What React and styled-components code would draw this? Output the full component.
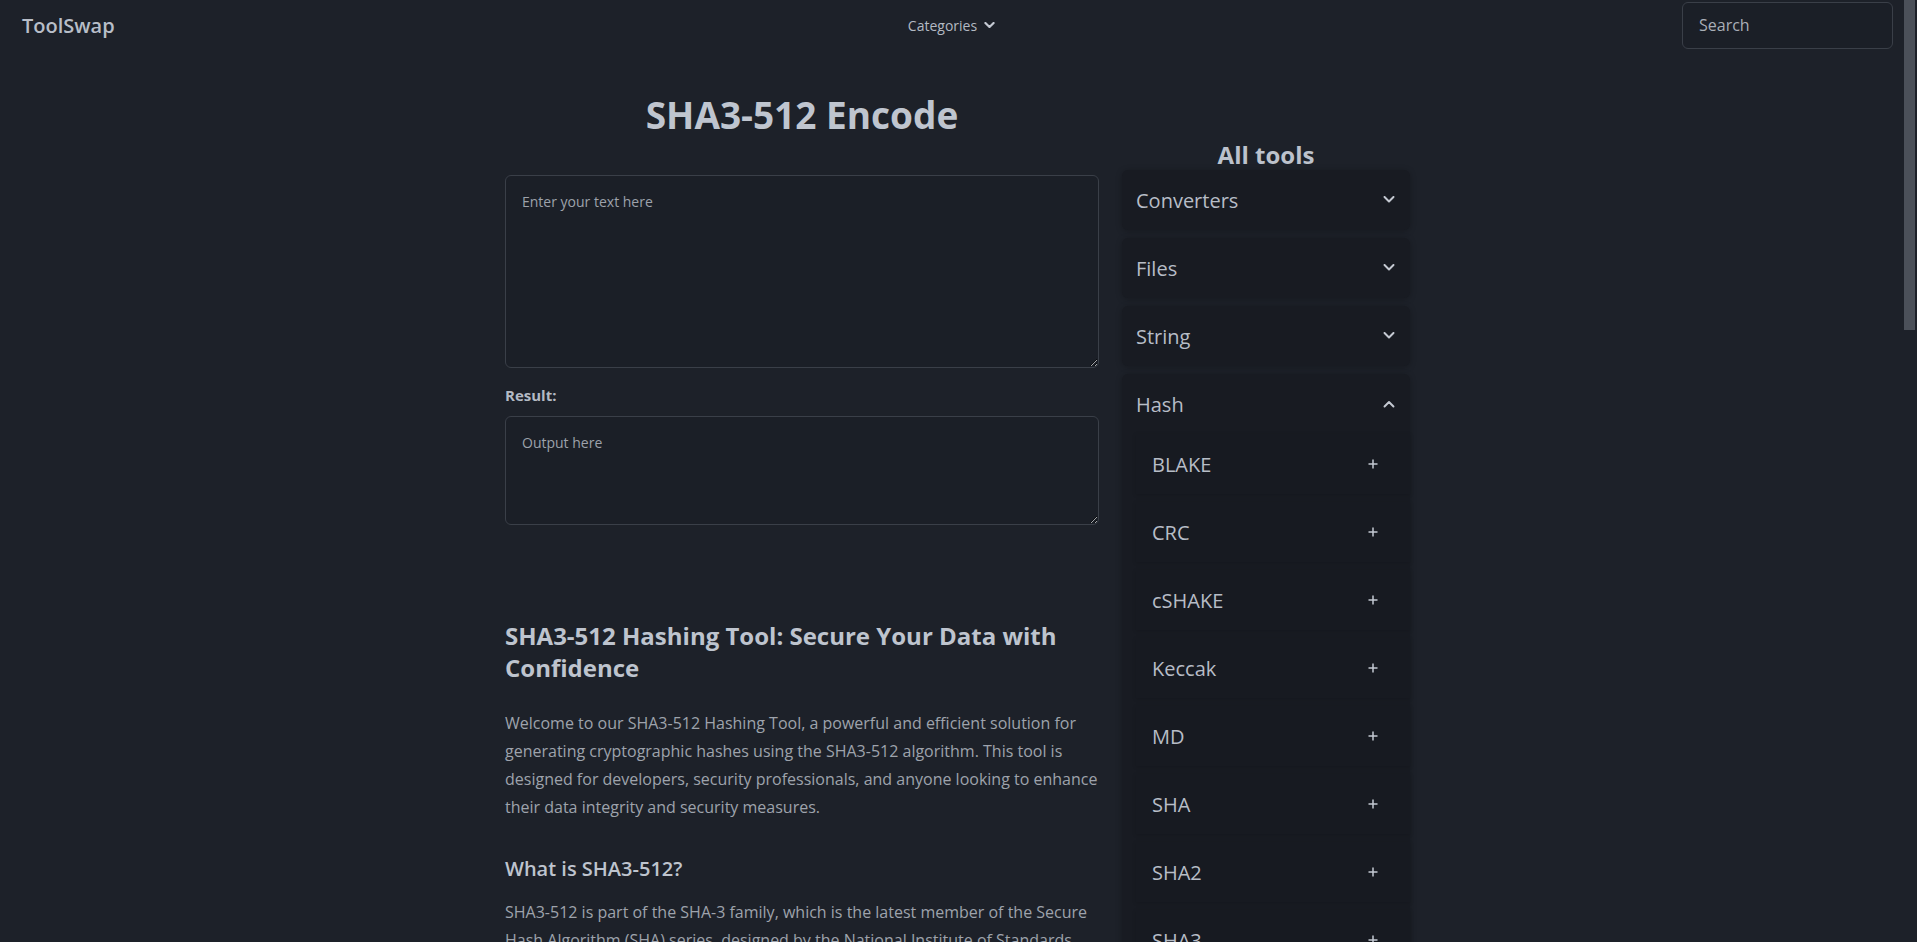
import React from "react";
import styled, { createGlobalStyle } from "styled-components";

const Global = createGlobalStyle`
  html, body { margin: 0; padding: 0; background: #1d2129; }
  body { font-family: "Open Sans", "Noto Sans", sans-serif; color: #a3a8b1; }
  * { box-sizing: border-box; }
  ::-webkit-scrollbar { width: 0; height: 0; }
`;

const ScrollTrack = styled.div`
  position: fixed;
  top: 0;
  right: 0;
  width: 13px;
  height: 100vh;
  background: #1d2129;
  z-index: 10;
`;

const ScrollThumb = styled.div`
  position: absolute;
  top: 0;
  left: 0;
  width: 11px;
  height: 330px;
  background: #4b5059;
`;

const Header = styled.header`
  display: grid;
  grid-template-columns: 1fr auto 1fr;
  align-items: center;
  height: 50px;
  padding: 0 24px 0 22px;
`;

const Logo = styled.div`
  font-size: 20px;
  font-weight: 600;
  color: #b8bec8;
`;

const CatButton = styled.button`
  display: flex;
  align-items: center;
  gap: 7px;
  background: none;
  border: none;
  font-family: inherit;
  font-size: 14px;
  color: #b3b9c3;
  padding: 0;
  margin-right: 12px;
  cursor: pointer;
`;

const SearchWrap = styled.div`
  display: flex;
  justify-content: flex-end;
`;

const SearchInput = styled.input`
  width: 211px;
  height: 47px;
  background: #1b1f27;
  border: 1px solid #3a3f48;
  border-radius: 6px;
  padding: 0 16px;
  font-family: inherit;
  font-size: 16px;
  color: #c0c5cd;
  outline: none;
  &::placeholder { color: #a9aeb7; }
`;

const Page = styled.div`
  display: flex;
  justify-content: center;
  gap: 23px;
  padding-right: 2px;
  padding-bottom: 80px;
`;

const MainCol = styled.main`
  width: 594px;
  display: flex;
  flex-direction: column;
`;

const Title = styled.h1`
  margin: 42px 0 37px;
  font-size: 37px;
  line-height: 46px;
  font-weight: 700;
  text-align: center;
  color: #bfc5cf;
`;

const TextArea = styled.textarea`
  width: 100%;
  height: ${(p) => p.$h}px;
  background: #1b1f27;
  border: 1px solid #3a3f48;
  border-radius: 6px;
  padding: 16px 16px;
  font-family: inherit;
  font-size: 14px;
  line-height: 20px;
  color: #c0c5cd;
  outline: none;
  resize: vertical;
  display: block;
  &::placeholder { color: #9da2ab; }
`;

const Label = styled.div`
  margin: 15px 0 9px;
  font-size: 15px;
  font-weight: 700;
  color: #b4bac4;
  line-height: 24px;
`;

const Article = styled.article`
  margin-top: 95px;
`;

const H2 = styled.h2`
  margin: 0 0 25px;
  font-size: 24px;
  line-height: 32px;
  font-weight: 700;
  color: #bec4ce;
`;

const H3 = styled.h3`
  margin: 34px 0 15px;
  font-size: 20px;
  line-height: 28px;
  font-weight: 600;
  color: #bec4ce;
`;

const P = styled.p`
  margin: 0;
  font-size: 16px;
  line-height: 28px;
  color: #9ea3ac;
`;

const Sidebar = styled.aside`
  width: 288px;
  padding-top: 90px;
`;

const SideTitle = styled.h2`
  margin: 0;
  font-size: 24px;
  line-height: 30px;
  font-weight: 700;
  text-align: center;
  color: #bcc2cc;
`;

const AccItem = styled.div`
  background: #181b22;
  border-radius: 6px;
  box-shadow: 0 1px 6px rgba(0, 0, 0, 0.25);
  margin-bottom: 8px;
`;

const AccHeader = styled.div`
  height: 60px;
  display: flex;
  align-items: center;
  justify-content: space-between;
  padding: 0 15px 0 14px;
  font-size: 20px;
  color: #b7bdc7;
`;

const Panel = styled.div`
  display: flex;
  flex-direction: column;
  gap: 8px;
  padding: 0 0 8px 14px;
`;

const SubItem = styled.div`
  height: 60px;
  display: flex;
  align-items: center;
  justify-content: space-between;
  padding: 0 32px 0 16px;
  font-size: 20px;
  color: #b7bdc7;
  background: #171a21;
  box-shadow: 0 1px 4px rgba(0, 0, 0, 0.15);
`;

const Chevron = ({ up, size = 12, w = 2 }) => (
  <svg width={size} height={size * 0.62} viewBox="0 0 12 7.5" fill="none">
    <path
      d={up ? "M1.5 6.5 L6 2 L10.5 6.5" : "M1.5 1 L6 5.5 L10.5 1"}
      stroke="#c4c9d2"
      strokeWidth={w}
      strokeLinecap="round"
      strokeLinejoin="round"
    />
  </svg>
);

const Plus = () => (
  <svg width="10" height="10" viewBox="0 0 10 10" fill="none">
    <path d="M5 0.5 V9.5 M0.5 5 H9.5" stroke="#c4c9d2" strokeWidth="1.5" />
  </svg>
);

const categories = ["Converters", "Files", "String"];
const hashItems = [
  "BLAKE",
  "CRC",
  "cSHAKE",
  "Keccak",
  "MD",
  "SHA",
  "SHA2",
  "SHA3",
  "SHAKE",
  "RIPEMD",
  "Whirlpool",
];

export default function App() {
  return (
    <>
      <Global />
      <ScrollTrack>
        <ScrollThumb />
      </ScrollTrack>
      <Header>
        <Logo>ToolSwap</Logo>
        <CatButton>
          Categories
          <Chevron size={11} w={2.4} />
        </CatButton>
        <SearchWrap>
          <SearchInput placeholder="Search" />
        </SearchWrap>
      </Header>
      <Page>
        <MainCol>
          <Title>SHA3-512 Encode</Title>
          <TextArea $h={193} placeholder="Enter your text here" />
          <Label>Result:</Label>
          <TextArea $h={109} placeholder="Output here" readOnly />
          <Article>
            <H2>SHA3-512 Hashing Tool: Secure Your Data with Confidence</H2>
            <P>
              Welcome to our SHA3-512 Hashing Tool, a powerful and efficient
              solution for generating cryptographic hashes using the SHA3-512
              algorithm. This tool is designed for developers, security
              professionals, and anyone looking to enhance their data integrity
              and security measures.
            </P>
            <H3>What is SHA3-512?</H3>
            <P>
              SHA3-512 is part of the SHA-3 family, which is the latest member
              of the Secure Hash Algorithm (SHA) series, designed by the
              National Institute of Standards and Technology (NIST). It produces
              a fixed 512-bit hash value from input data of any size, making it
              ideal for verifying data integrity and authenticity.
            </P>
            <H3>How to Use the SHA3-512 Hashing Tool</H3>
            <P>
              Simply enter your text in the input field above. The tool
              instantly computes the SHA3-512 hash and displays the result in
              the output field, ready to be copied and used in your projects.
            </P>
            <H3>Why Choose SHA3-512?</H3>
            <P>
              SHA3-512 offers strong resistance against collision and preimage
              attacks, thanks to its sponge construction. It is widely used in
              digital signatures, password storage, blockchain applications and
              other security-critical systems.
            </P>
          </Article>
        </MainCol>
        <Sidebar>
          <SideTitle>All tools</SideTitle>
          {categories.map((c) => (
            <AccItem key={c}>
              <AccHeader>
                {c}
                <Chevron />
              </AccHeader>
            </AccItem>
          ))}
          <AccItem>
            <AccHeader>
              Hash
              <Chevron up />
            </AccHeader>
            <Panel>
              {hashItems.map((h) => (
                <SubItem key={h}>
                  {h}
                  <Plus />
                </SubItem>
              ))}
            </Panel>
          </AccItem>
          {["Encoders", "Generators"].map((c) => (
            <AccItem key={c}>
              <AccHeader>
                {c}
                <Chevron />
              </AccHeader>
            </AccItem>
          ))}
        </Sidebar>
      </Page>
    </>
  );
}
